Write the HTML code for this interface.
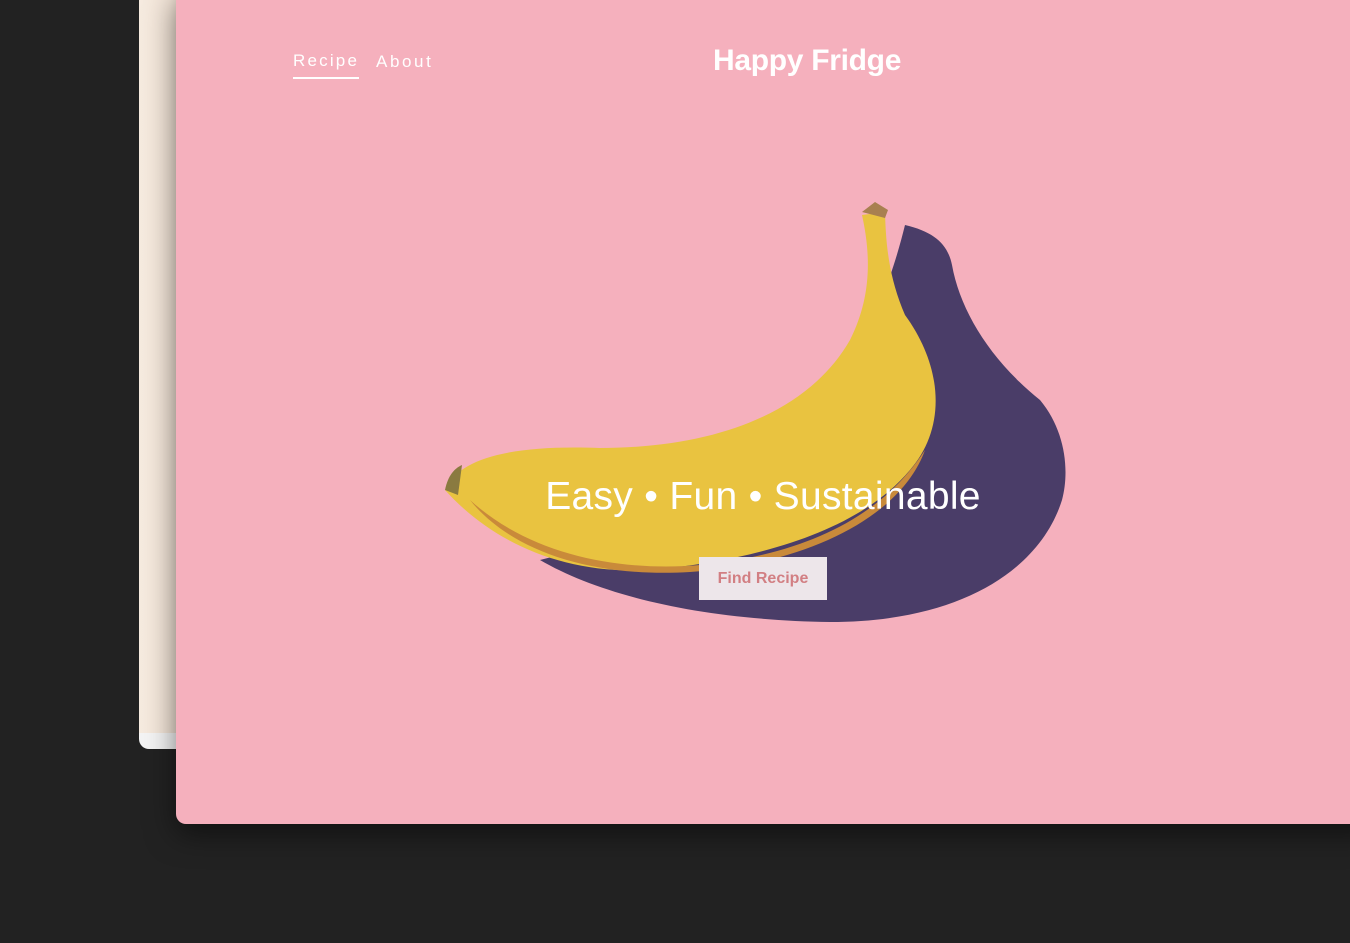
<!DOCTYPE html>
<html><head><meta charset="utf-8"><style>
body{margin:0;width:1350px;height:943px;background:#222;overflow:hidden;position:relative;font-family:"Liberation Sans",sans-serif}
.back{position:absolute;left:139px;top:-10px;width:60px;height:759px;background:#f4f4f4;border-radius:0 0 10px 10px}
.back .in{position:absolute;left:0;top:0;width:60px;height:743px;background:linear-gradient(90deg,#f6ebe0,#f3e5d8 50%,#d8c8ba)}
.main{position:absolute;left:176px;top:-10px;width:1200px;height:834px;background:#f5b0bd;border-radius:10px;box-shadow:0 10px 30px rgba(0,0,0,.5)}
.nav{position:absolute;color:#fff;font-size:17px;letter-spacing:2.2px;top:51px}
.title{position:absolute;left:713px;top:44px;color:#fff;font-size:30px;font-weight:bold;letter-spacing:-0.3px}
.hero{position:absolute;left:0;width:1526px;top:475px;text-align:center;color:#fff;font-size:39px;letter-spacing:0.3px}
.btn{position:absolute;left:699px;top:557px;width:128px;height:43px;background:#ede6ea;color:#d27f83;font-size:16px;font-weight:bold;line-height:43px;text-align:center}
</style></head><body>
<div class="back"><div class="in"></div></div>
<div class="main"></div>
<svg style="position:absolute;left:0;top:0" width="1350" height="943">
<path d="M905 225 C935 232 948 245 952 265 C960 310 990 360 1040 400 C1065 430 1070 470 1062 500 C1040 570 960 622 830 622 C700 620 600 595 540 560 C700 520 850 450 905 225Z" fill="#4a3d68"/>
<path d="M445 490 C460 455 520 445 600 448 C720 448 810 410 850 340 C870 300 872 260 862 215 L885 212 C886 250 890 280 905 315 C945 370 945 430 910 470 C860 530 760 560 650 570 C560 575 490 540 445 490Z" fill="#e9c340"/>
<path d="M470 500 C530 555 620 572 700 565 C800 555 880 520 925 450 C900 520 800 565 690 572 C590 578 510 550 470 500Z" fill="#c98a3a"/>
<path d="M862 212 L875 202 L888 210 L885 218Z" fill="#a88050"/>
<path d="M445 490 C448 475 455 468 462 465 L458 495Z" fill="#8a7a40"/>
</svg>
<div class="nav" style="left:293px;border-bottom:2px solid #fff;padding-bottom:6px">Recipe</div>
<div class="nav" style="left:376px;top:52px;letter-spacing:2.6px">About</div>
<div class="title">Happy Fridge</div>
<div class="hero">Easy • Fun • Sustainable</div>
<div class="btn">Find Recipe</div>
</body></html>
